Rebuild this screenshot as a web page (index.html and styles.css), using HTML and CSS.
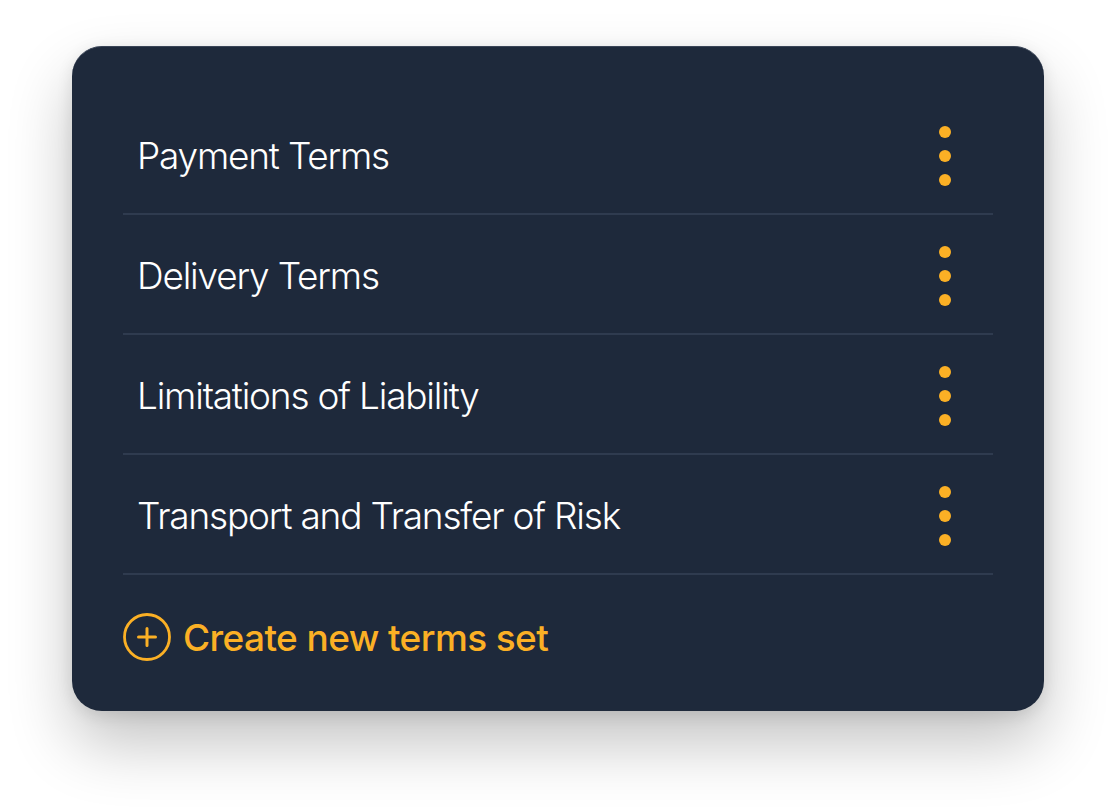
FILE: index.html
```html
<!DOCTYPE html>
<html lang="en">
<head>
  <meta charset="UTF-8" />
  <meta name="viewport" content="width=device-width, initial-scale=1" />
  <title>Terms Sets</title>
  <link rel="stylesheet" href="styles.css">
</head>
<body>
  <div class="card">
    <div class="term-row">
      <span class="term-name">Payment Terms</span>
      <span class="more"><i></i><i></i><i></i></span>
    </div>
    <div class="term-row">
      <span class="term-name">Delivery Terms</span>
      <span class="more"><i></i><i></i><i></i></span>
    </div>
    <div class="term-row">
      <span class="term-name">Limitations of Liability</span>
      <span class="more"><i></i><i></i><i></i></span>
    </div>
    <div class="term-row">
      <span class="term-name">Transport and Transfer of Risk</span>
      <span class="more"><i></i><i></i><i></i></span>
    </div>

    <div class="create">
      <svg class="plus-icon" width="48" height="48" viewBox="0 0 48 48">
        <circle cx="24" cy="24" r="22.5" fill="none" stroke="#fbb025" stroke-width="2.8" />
        <path d="M24 15.5v17M15.5 24h17" stroke="#fbb025" stroke-width="3" stroke-linecap="round" />
      </svg>
      <span class="create-label">Create new terms set</span>
    </div>
  </div>
</body>
</html>
```

FILE: styles.css
```css
html {
  background-color: #ffffff;
}
body {
  margin: 0;
  padding: 46px 0 101px 72px;
  font-family: Inter, "Liberation Sans", sans-serif;
}
.card {
  width: 972px;
  box-sizing: border-box;
  padding: 48px 51px 50px 51px;
  background-color: #1e293b;
  border-radius: 30px;
  border-top: 1px solid #3a4557;
  box-shadow: 0 32px 64px rgba(0, 0, 0, 0.24), 0 4px 16px rgba(0, 0, 0, 0.1);
}
.term-row {
  height: 120px;
  box-sizing: border-box;
  display: flex;
  align-items: center;
  justify-content: space-between;
  padding: 2px 42px 0 14px;
  border-bottom: 2px solid #2f3b4f;
}
.term-name {
  color: #ffffff;
  font-size: 37px;
  font-weight: 300;
  letter-spacing: -1.2px;
}
.more {
  display: flex;
  flex-direction: column;
  gap: 12px;
  margin-top: 2px;
}
.more i {
  display: block;
  width: 12px;
  height: 12px;
  border-radius: 50%;
  background-color: #fbb025;
}
.create {
  display: flex;
  align-items: center;
  gap: 12px;
  margin-top: 38px;
}
.plus-icon {
  display: block;
}
.create-label {
  color: #fbb025;
  font-size: 37px;
  font-weight: 500;
  letter-spacing: -0.6px;
}
```
